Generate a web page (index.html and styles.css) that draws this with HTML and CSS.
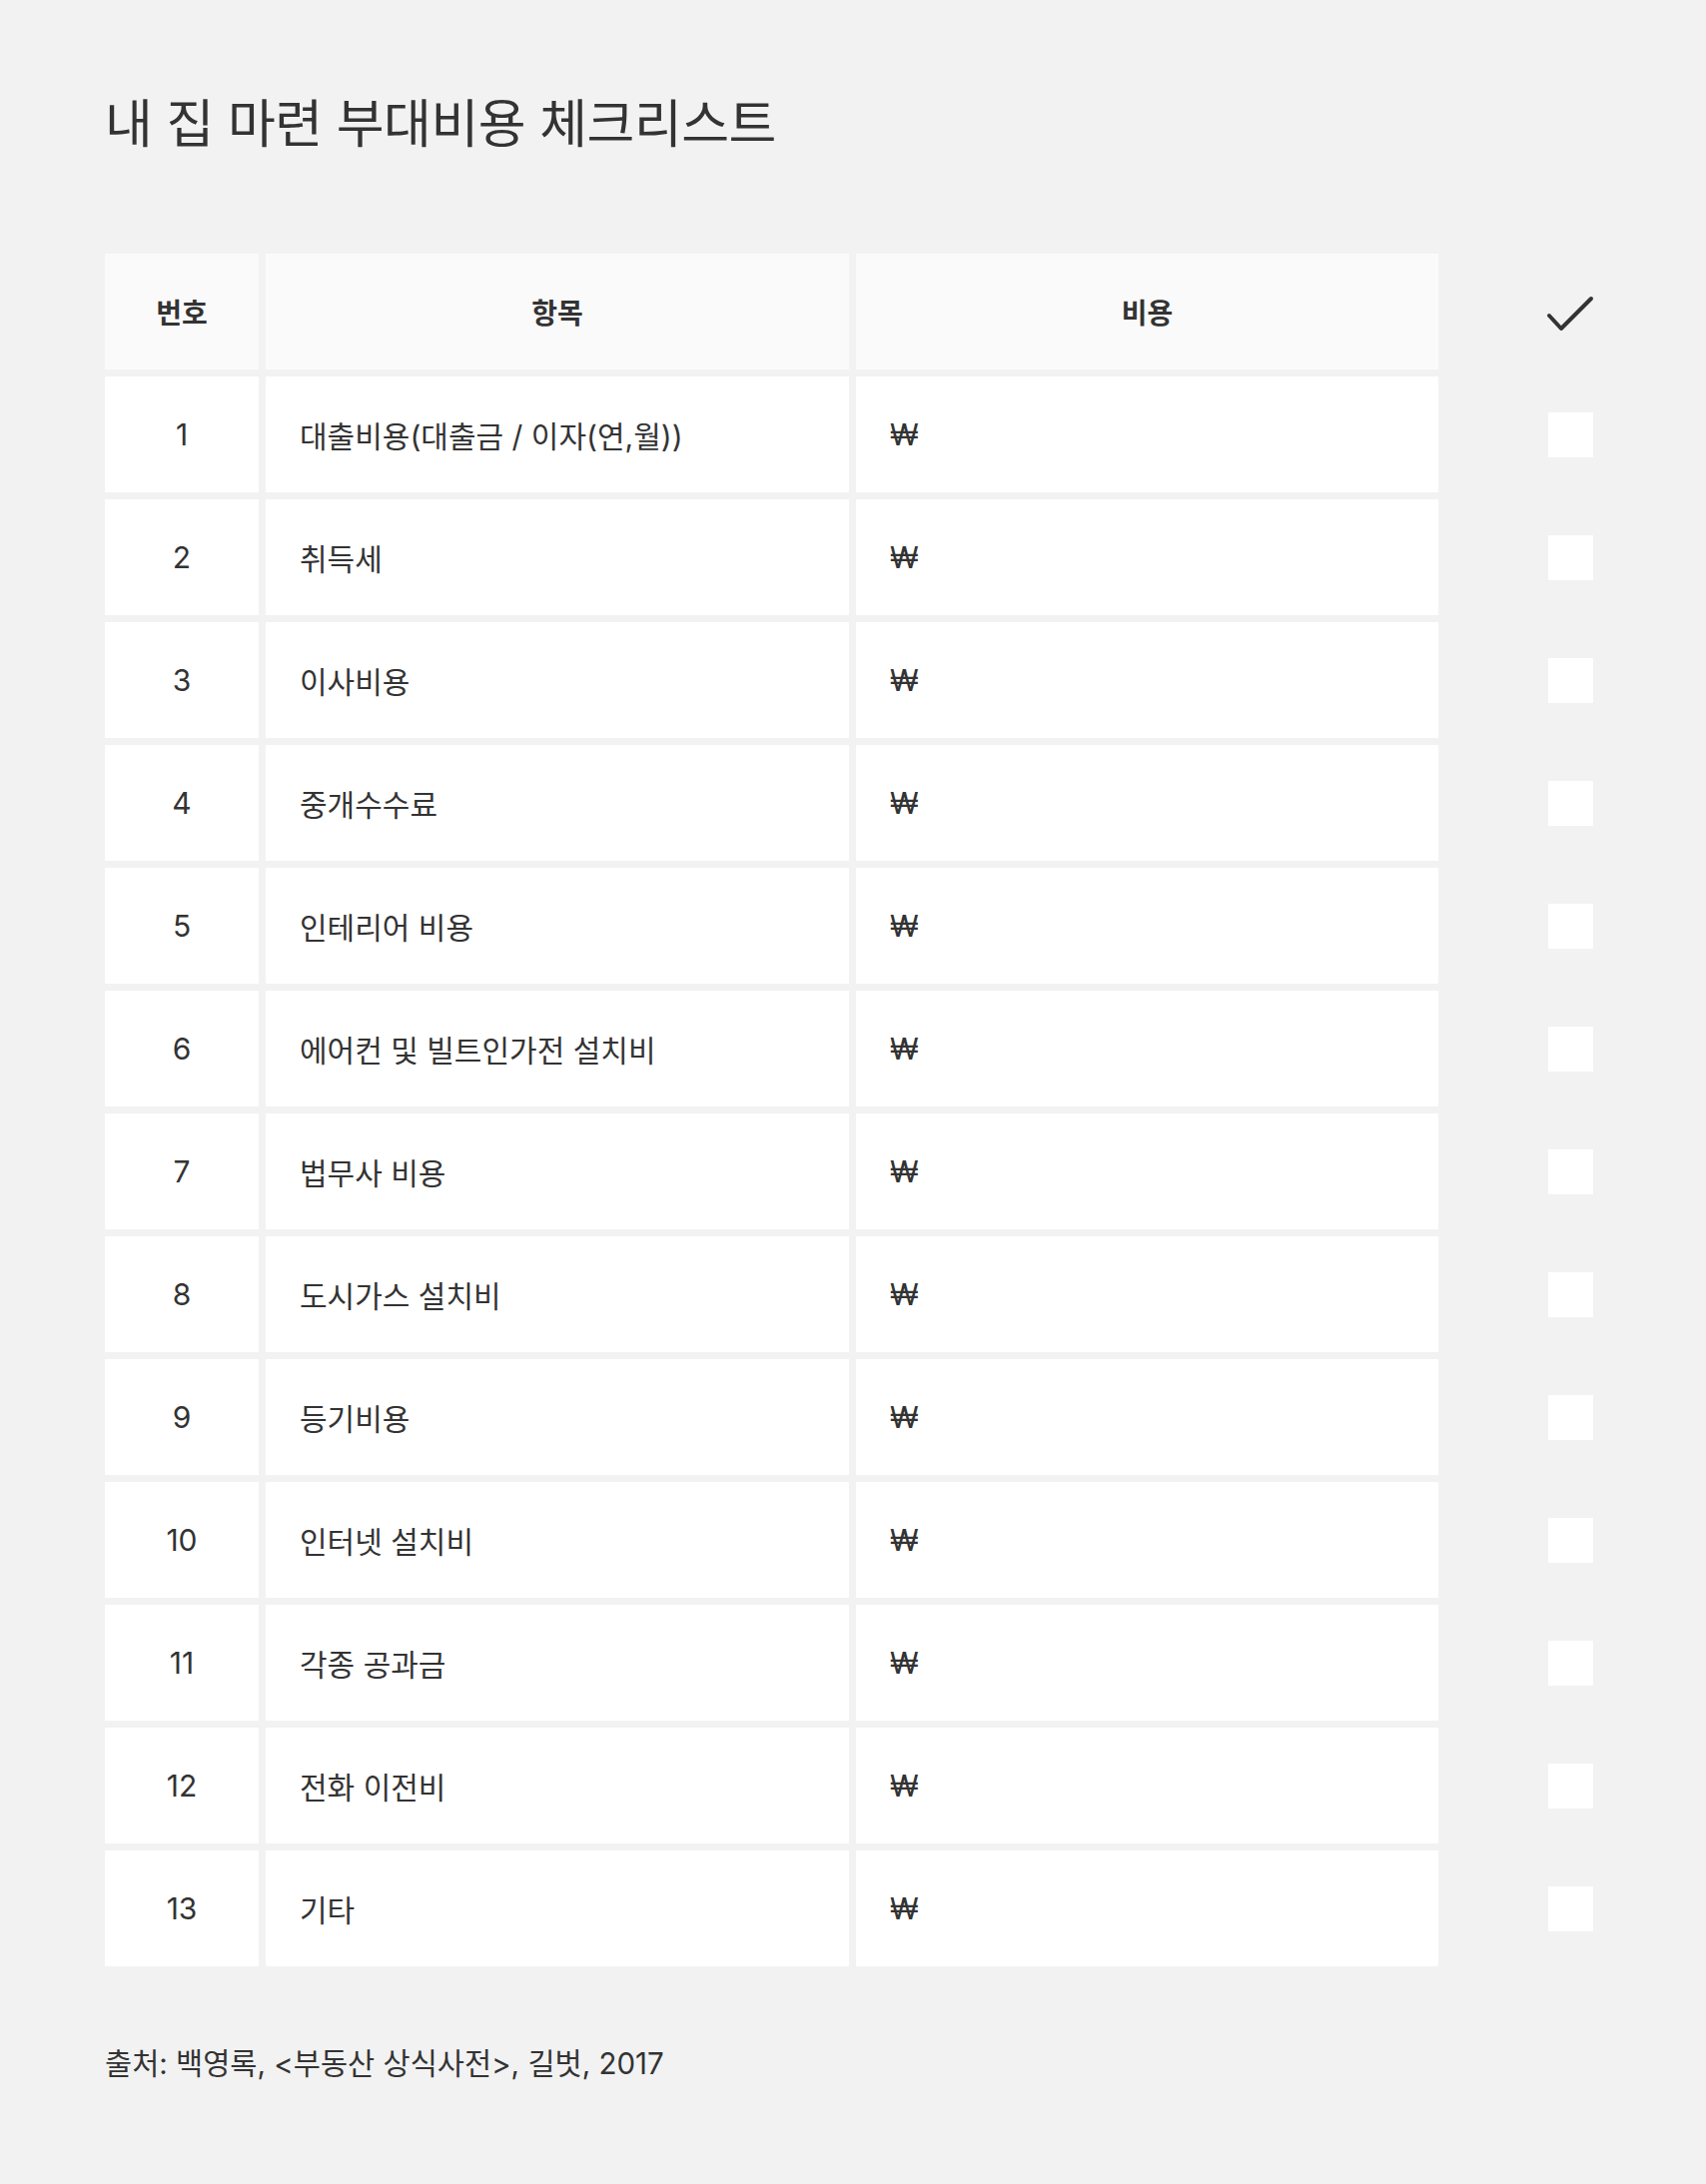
FILE: index.html
```html
<!DOCTYPE html>
<html lang="ko">
<head>
  <meta charset="UTF-8">
  <meta name="viewport" content="width=device-width, initial-scale=1.0">
  <title>내 집 마련 부대비용 체크리스트</title>
  <link rel="stylesheet" href="styles.css">
</head>
<body>
  <div class="page">
    <h1>내 집 마련 부대비용 체크리스트</h1>

    <div class="sheet">
      <div class="cell head">번호</div>
      <div class="cell head">항목</div>
      <div class="cell head">비용</div>
      <div class="check-head">
        <svg width="48" height="38" viewBox="0 0 48 38"><polyline points="3,20 15,33 45,3" fill="none" stroke="#333" stroke-width="4" stroke-linecap="round" stroke-linejoin="round"/></svg>
      </div>

      <div class="cell num">1</div>
      <div class="cell item">대출비용(대출금 / 이자(연,월))</div>
      <div class="cell cost">₩</div>
      <div class="check"><span class="box"></span></div>

      <div class="cell num">2</div>
      <div class="cell item">취득세</div>
      <div class="cell cost">₩</div>
      <div class="check"><span class="box"></span></div>

      <div class="cell num">3</div>
      <div class="cell item">이사비용</div>
      <div class="cell cost">₩</div>
      <div class="check"><span class="box"></span></div>

      <div class="cell num">4</div>
      <div class="cell item">중개수수료</div>
      <div class="cell cost">₩</div>
      <div class="check"><span class="box"></span></div>

      <div class="cell num">5</div>
      <div class="cell item">인테리어 비용</div>
      <div class="cell cost">₩</div>
      <div class="check"><span class="box"></span></div>

      <div class="cell num">6</div>
      <div class="cell item">에어컨 및 빌트인가전 설치비</div>
      <div class="cell cost">₩</div>
      <div class="check"><span class="box"></span></div>

      <div class="cell num">7</div>
      <div class="cell item">법무사 비용</div>
      <div class="cell cost">₩</div>
      <div class="check"><span class="box"></span></div>

      <div class="cell num">8</div>
      <div class="cell item">도시가스 설치비</div>
      <div class="cell cost">₩</div>
      <div class="check"><span class="box"></span></div>

      <div class="cell num">9</div>
      <div class="cell item">등기비용</div>
      <div class="cell cost">₩</div>
      <div class="check"><span class="box"></span></div>

      <div class="cell num">10</div>
      <div class="cell item">인터넷 설치비</div>
      <div class="cell cost">₩</div>
      <div class="check"><span class="box"></span></div>

      <div class="cell num">11</div>
      <div class="cell item">각종 공과금</div>
      <div class="cell cost">₩</div>
      <div class="check"><span class="box"></span></div>

      <div class="cell num">12</div>
      <div class="cell item">전화 이전비</div>
      <div class="cell cost">₩</div>
      <div class="check"><span class="box"></span></div>

      <div class="cell num">13</div>
      <div class="cell item">기타</div>
      <div class="cell cost">₩</div>
      <div class="check"><span class="box"></span></div>
    </div>

    <p class="source">출처: 백영록, &lt;부동산 상식사전&gt;, 길벗, 2017</p>
  </div>
</body>
</html>
```

FILE: styles.css
```css
body {
  margin: 0;
  padding: 0;
  background: #f2f2f2;
  color: #333;
  font-family: Inter, "Noto Sans CJK KR", sans-serif;
}

.page {
  padding: 94px 0 0 105px;
}

h1 {
  margin: 0 0 98px 0;
  font-size: 52px;
  font-weight: 400;
  line-height: 1.2;
  letter-spacing: -0.5px;
}

.sheet {
  display: grid;
  grid-template-columns: 154px 584px 583px 250px;
  grid-auto-rows: 116px;
  gap: 7px;
}

.cell {
  background: #fff;
  display: flex;
  align-items: center;
  font-size: 30px;
}

.head {
  background: #fafafa;
  justify-content: center;
  font-weight: 700;
  font-size: 28px;
}

.num {
  justify-content: center;
  font-size: 30px;
}

.item,
.cost {
  padding-left: 34px;
}

.check-head,
.check {
  display: flex;
  align-items: center;
  justify-content: center;
}

.check-head svg {
  margin-top: 6px;
}

.box {
  width: 45px;
  height: 45px;
  background: #fff;
}

.source {
  margin: 74px 0 0 0;
  font-size: 29.5px;
}
```
